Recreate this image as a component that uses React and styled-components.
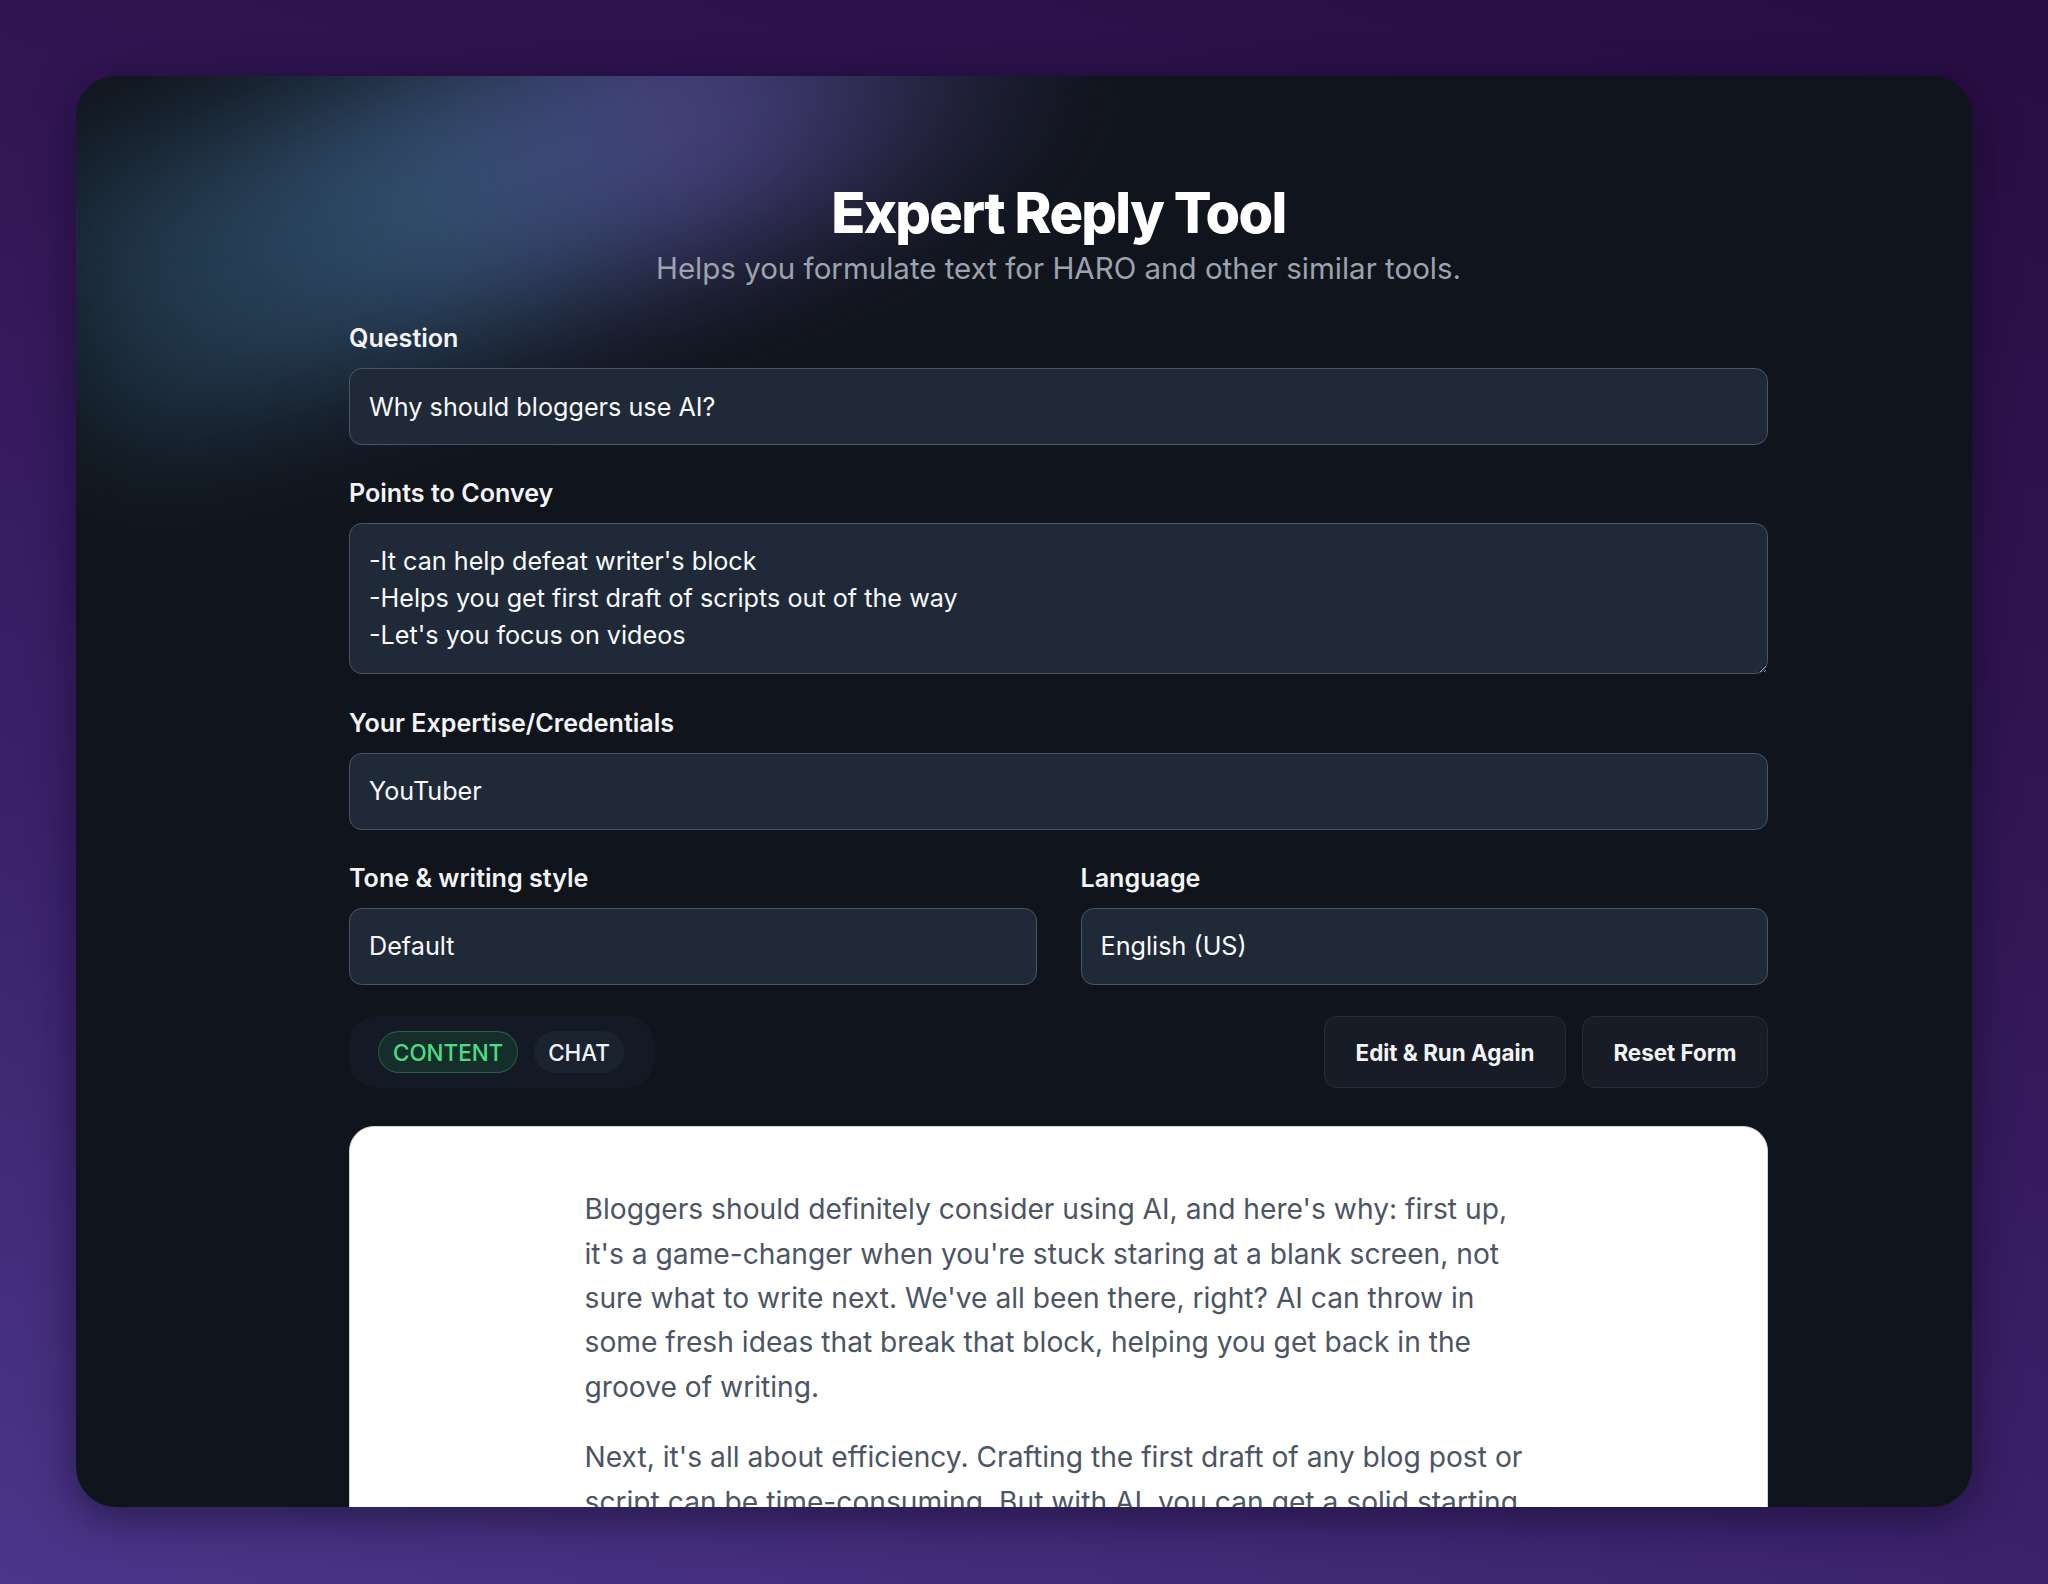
import React from 'react';
import styled, { createGlobalStyle } from 'styled-components';

const GlobalStyle = createGlobalStyle`
    html, body {
        margin: 0;
        padding: 0;
    }
    body {
        min-height: 1584px;
        background: linear-gradient(200deg, #280d42 0%, #2f1450 30%, #3a2068 65%, #4a3689 100%);
        font-family: Inter, "Noto Sans", "Liberation Sans", sans-serif;
    }
`

const Page = styled.div`
    padding: 76px 76px 77px 76px;
`

const Card = styled.div`
    position: relative;
    width: 1896px;
    height: 1431px;
    border-radius: 40px;
    overflow: hidden;
    box-sizing: border-box;
    padding: 105px 204px 0 273px;
    background: #10141c;
    box-shadow: 0 10px 40px rgba(10, 5, 25, 0.5);

    /* soft glow in the top left corner */
    &::before {
        content: '';
        position: absolute;
        left: -40px;
        top: -60px;
        width: 1050px;
        height: 280px;
        background: linear-gradient(90deg, rgba(35, 70, 90, 0.55) 0%, rgba(62, 98, 138, 0.75) 38%, rgba(88, 78, 158, 0.75) 64%, rgba(60, 40, 110, 0) 100%);
        transform: rotate(-19deg);
        transform-origin: 50% 50%;
        filter: blur(65px);
        pointer-events: none;
    }
`

const Content = styled.div`
    position: relative;
    z-index: 1;
`

const Header = styled.header`
    display: flex;
    flex-direction: column;
    align-items: center;
    margin-bottom: 31px;
`

const Title = styled.h1`
    margin: 0;
    font-size: 56px;
    line-height: 64px;
    font-weight: 800;
    letter-spacing: -0.03em;
    color: #ffffff;
`

const Subtitle = styled.p`
    margin: 1px 0 0;
    font-size: 29.5px;
    line-height: 45px;
    color: #9ca3af;
`

const Form = styled.div`
    display: flex;
    flex-direction: column;
    gap: 32.3px;
`

const Row = styled.div`
    display: grid;
    grid-template-columns: 1fr 1fr;
    gap: 44px;
`

const Field = styled.label`
    display: flex;
    flex-direction: column;
    gap: 14px;
`

const Label = styled.span`
    font-size: 25.1px;
    line-height: 32px;
    font-weight: 600;
    color: #f3f4f6;
`

const TextInput = styled.input`
    box-sizing: border-box;
    height: 77px;
    width: 100%;
    padding: 0 19px;
    background: #1f2937;
    border: 1.6px solid #4b5563;
    border-radius: 12.8px;
    font-family: inherit;
    font-size: 25.2px;
    color: #f9fafb;
    outline: none;
`

const TextArea = styled.textarea`
    box-sizing: border-box;
    height: 151px;
    width: 100%;
    padding: 19px 19px 17px;
    background: #1f2937;
    border: 1.6px solid #4b5563;
    border-radius: 12.8px;
    font-family: inherit;
    font-size: 25.2px;
    line-height: 37px;
    color: #f9fafb;
    outline: none;
    resize: vertical;
`

const Toolbar = styled.div`
    display: flex;
    justify-content: space-between;
    align-items: center;
    margin-top: -1px;
`

const ModeSwitch = styled.div`
    display: flex;
    gap: 16px;
    align-items: center;
    height: 72px;
    box-sizing: border-box;
    padding: 0 30px 0 29px;
    border-radius: 28px;
    background: #141a25;
`

const Pill = styled.button`
    height: 42px;
    box-sizing: border-box;
    padding: 0 ${p => (p.$active ? '14px' : '13px')};
    border-radius: 999px;
    font-family: inherit;
    font-size: 22.4px;
    font-weight: 500;
    text-transform: uppercase;
    color: ${p => (p.$active ? '#4ade80' : '#f3f4f6')};
    background: ${p => (p.$active ? 'rgba(34, 197, 94, 0.12)' : '#1b2230')};
    border: 1.6px solid ${p => (p.$active ? 'rgba(74, 222, 128, 0.3)' : 'transparent')};
`

const Actions = styled.div`
    display: flex;
    gap: 16px;
`

const ActionButton = styled.button`
    height: 72px;
    box-sizing: border-box;
    padding: 0 30.5px;
    border-radius: 12.8px;
    background: #171c27;
    border: 1.6px solid #262c39;
    font-family: inherit;
    font-size: 22.4px;
    font-weight: 700;
    color: #f3f4f6;
`

const Output = styled.div`
    margin-top: 38px;
    background: #ffffff;
    border: 1.6px solid #d1d5db;
    border-radius: 25px;
    padding: 60px 0 40px;
    display: flex;
    justify-content: center;
`

const Prose = styled.div`
    width: 948px;
    color: #4b5563;
    font-size: 28.2px;
    line-height: 44.4px;
    p {
        margin: 0 0 26px;
    }
`

const Line = styled.span`
    display: block;
    white-space: nowrap;
`

const answer = [
    [
        "Bloggers should definitely consider using AI, and here's why: first up,",
        "it's a game-changer when you're stuck staring at a blank screen, not",
        "sure what to write next. We've all been there, right? AI can throw in",
        "some fresh ideas that break that block, helping you get back in the",
        "groove of writing.",
    ],
    [
        "Next, it's all about efficiency. Crafting the first draft of any blog post or",
        "script can be time-consuming. But with AI, you can get a solid starting",
        "point in minutes, so you can spend your energy polishing your voice.",
    ],
];

const App = () => {
    return (
        <Page>
            <GlobalStyle />
            <Card>
                <Content>
                    <Header>
                        <Title>Expert Reply Tool</Title>
                        <Subtitle>Helps you formulate text for HARO and other similar tools.</Subtitle>
                    </Header>
                    <Form>
                        <Field>
                            <Label>Question</Label>
                            <TextInput readOnly value="Why should bloggers use AI?" />
                        </Field>
                        <Field>
                            <Label>Points to Convey</Label>
                            <TextArea
                                readOnly
                                value={"-It can help defeat writer's block\n-Helps you get first draft of scripts out of the way\n-Let's you focus on videos"}
                            />
                        </Field>
                        <Field>
                            <Label>Your Expertise/Credentials</Label>
                            <TextInput readOnly value="YouTuber" />
                        </Field>
                        <Row>
                            <Field>
                                <Label>Tone &amp; writing style</Label>
                                <TextInput readOnly value="Default" />
                            </Field>
                            <Field>
                                <Label>Language</Label>
                                <TextInput readOnly value="English (US)" />
                            </Field>
                        </Row>
                        <Toolbar>
                            <ModeSwitch>
                                <Pill $active>Content</Pill>
                                <Pill>Chat</Pill>
                            </ModeSwitch>
                            <Actions>
                                <ActionButton>Edit &amp; Run Again</ActionButton>
                                <ActionButton>Reset Form</ActionButton>
                            </Actions>
                        </Toolbar>
                    </Form>
                    <Output>
                        <Prose>
                            {answer.map((para, i) => (
                                <p key={i}>
                                    {para.map((line, j) => <Line key={j}>{line}</Line>)}
                                </p>
                            ))}
                        </Prose>
                    </Output>
                </Content>
            </Card>
        </Page>
    );
};

export default App;
